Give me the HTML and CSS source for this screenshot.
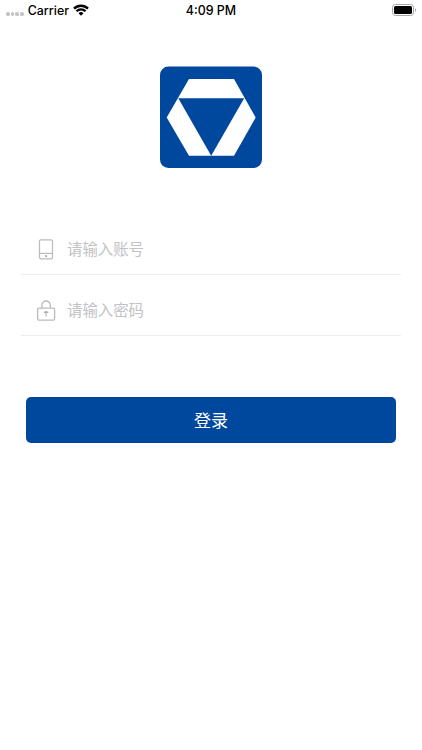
FILE: index.html
```html
<!DOCTYPE html>
<html lang="zh-CN">
	<head>
		<meta charset="UTF-8">
		<meta name="viewport" content="width=device-width, initial-scale=1">
		<title>登录</title>
		<link rel="stylesheet" href="styles.css">
	</head>
	<body>
		<div class="status">
			<div class="carrier">
				<span class="dots"><i></i><i></i><i></i><i></i></span>
				<span class="carrierName">Carrier</span>
				<svg class="wifi" width="16" height="12" viewBox="0 0 16 12">
					<g fill="none" stroke="#000" stroke-width="2.3">
						<path d="M1 4.6a10 10 0 0 1 14 0"/>
						<path d="M3.5 7.3a6.4 6.4 0 0 1 9 0"/>
					</g>
					<path d="M8 11.7L5.5 9.2a3.6 3.6 0 0 1 5 0z"/>
				</svg>
			</div>
			<span class="time">4:09 PM</span>
			<svg class="battery" width="25" height="12" viewBox="0 0 25 12">
				<rect x=".5" y=".5" width="21" height="11" rx="3" fill="#fff" stroke="#a6a6a6"/>
				<rect x="2" y="2" width="18" height="8" rx="1.6"/>
				<path d="M23 4.2c1.7.5 1.7 3.1 0 3.6z" fill="#a6a6a6"/>
			</svg>
		</div>
		<div class="logo">
			<svg width="102" height="102" viewBox="0 0 102 102">
				<rect y=".4" width="102" height="101.6" rx="8.5" fill="#00489d"/>
				<path d="M29 12.9h45L95.7 51.4 74 89.7H29L6.7 51.4z" fill="#fff"/>
				<path d="M18.3 32.2h65.9L51.2 89.7z" fill="#00489d"/>
			</svg>
		</div>
		<form class="login">
			<label class="row">
				<svg class="icon" width="20" height="22" viewBox="0 0 20 22">
					<g fill="none" stroke="#bbbbbf" stroke-width="1.2">
						<rect x="3.5" y="1.9" width="13" height="19" rx="1.4"/>
						<path d="M3.5 15.4h13"/>
					</g>
					<circle cx="10" cy="18.1" r="1.1" fill="#a8a8ac"/>
				</svg>
				<input type="text" placeholder="请输入账号">
			</label>
			<label class="row">
				<svg class="icon" width="20" height="22" viewBox="0 0 20 22">
					<g fill="none" stroke="#bbbbbf" stroke-width="1.3">
						<rect x="1.6" y="9.1" width="17" height="12" rx="1.4"/>
						<path d="M5.9 9.1V6.2a4.2 4.2 0 0 1 8.4 0v2.9"/>
						<path d="M10.1 13.6v4"/>
					</g>
					<path d="M7.6 14.1a2.5 2.2 0 0 1 5 0z" fill="#b3b3b7"/>
				</svg>
				<input type="password" placeholder="请输入密码">
			</label>
			<button type="button" class="btn">登录</button>
		</form>
	</body>
</html>
```
FILE: styles.css
```css
*{
	margin: 0;
	padding: 0;
	box-sizing: border-box;
}
body{
	background-color: #fff;
	font-family: "Liberation Sans","Noto Sans CJK SC",sans-serif;
}
.status{
	display: grid;
	grid-template-columns: 1fr auto 1fr;
	align-items: center;
	height: 20px;
	padding: 0 5px 0 6px;
	font: 500 12.4px/20px Inter,sans-serif;
	color: #000;
}
.carrier{
	display: flex;
	align-items: center;
}
.carrierName,.time{
	padding-top: 1px;
	line-height: 19px;
}
.time{
	margin-right: 1px;
}
.dots{
	display: flex;
	gap: 1px;
	margin: 8px 4px 0 0;
}
.dots i{
	width: 3.7px;
	height: 3.7px;
	border-radius: 50%;
	background-color: #c4c4c4;
}
.wifi{
	margin-left: 4px;
}
.battery{
	justify-self: end;
}
.logo{
	height: 102px;
	margin-top: 46px;
	text-align: center;
}
.logo svg{
	display: block;
	margin: 0 auto;
}
.login{
	padding: 46px 21px 0;
}
.row{
	display: flex;
	align-items: center;
	height: 61px;
	padding: 10px 15px 0;
	border-bottom: 1px solid #ededed;
}
.icon{
	flex: none;
	margin-right: 11px;
}
.row input{
	flex: 1;
	min-width: 0;
	padding-bottom: 2px;
	border: none;
	outline: none;
	background: none;
	font: 15.4px/24px "Noto Sans CJK SC",sans-serif;
	color: #333;
}
.row input::placeholder{
	color: #c2c2c5;
	opacity: 1;
}
.btn{
	display: block;
	width: 370px;
	height: 46px;
	margin: 61px auto 0;
	border: none;
	border-radius: 5px;
	background-color: #00489d;
	font: 17px/46px "Noto Sans CJK SC",sans-serif;
	color: #fff;
}
```
